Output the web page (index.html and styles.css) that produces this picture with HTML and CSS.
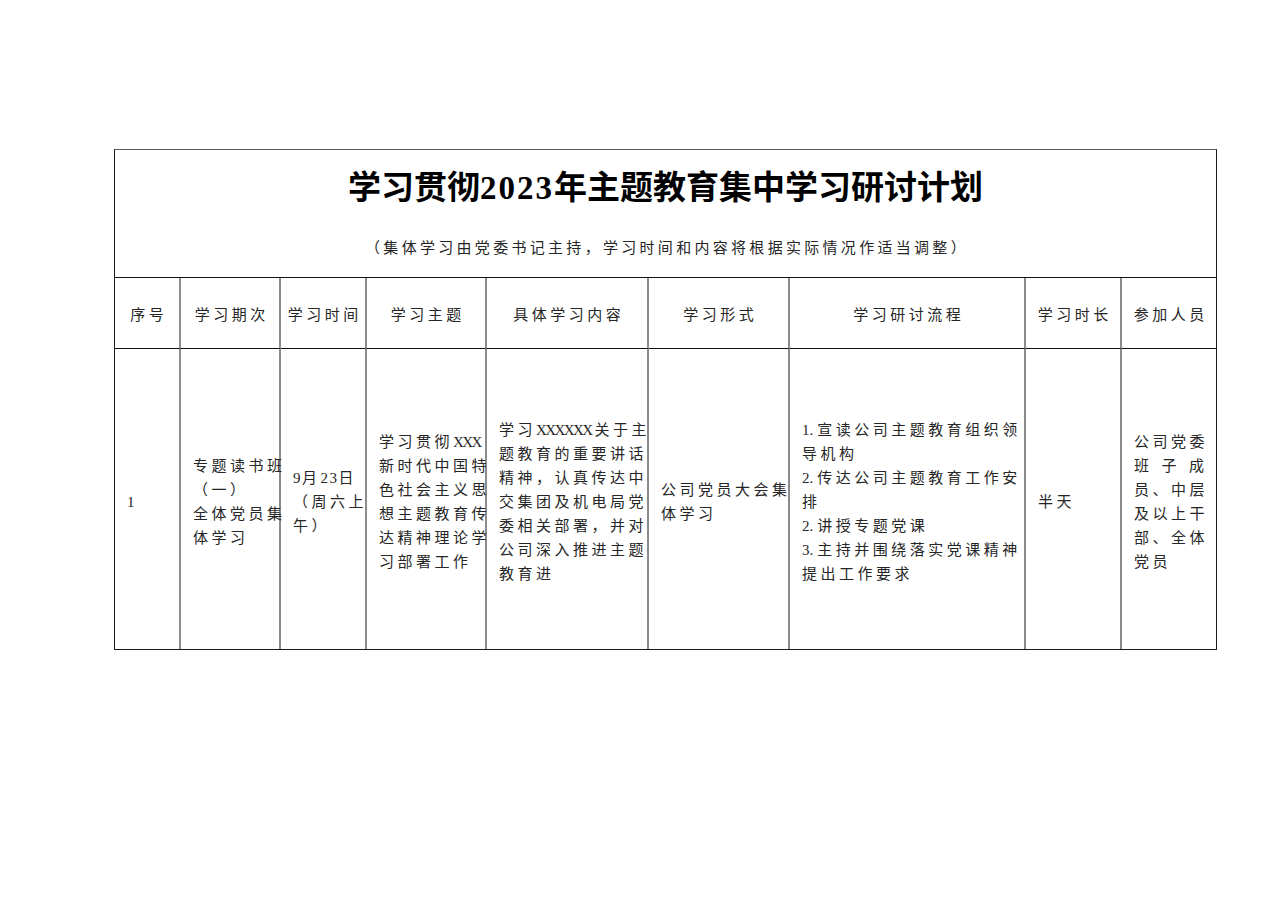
FILE: index.html
```html
<!DOCTYPE html>
<html lang="zh-CN">
<head>
<meta charset="utf-8">
<title>学习贯彻2023年主题教育集中学习研讨计划</title>
<link rel="stylesheet" href="styles.css">
</head>
<body>
<div class="page">
  <div class="sheet">
    <div class="cell title-cell">
      <h1 class="title">学习贯彻<span class="num">2023</span>年主题教育集中学习研讨计划</h1>
      <p class="subtitle">（集体学习由党委书记主持，学习时间和内容将根据实际情况作适当调整）</p>
    </div>

    <div class="cell head">序号</div>
    <div class="cell head">学习期次</div>
    <div class="cell head">学习时间</div>
    <div class="cell head">学习主题</div>
    <div class="cell head">具体学习内容</div>
    <div class="cell head">学习形式</div>
    <div class="cell head">学习研讨流程</div>
    <div class="cell head">学习时长</div>
    <div class="cell head last">参加人员</div>

    <div class="cell body"><span class="ln"><span class="lat">1</span></span></div>
    <div class="cell body">
      <span class="ln">专题读书班</span>
      <span class="ln">（一）</span>
      <span class="ln">全体党员集</span>
      <span class="ln">体学习</span>
    </div>
    <div class="cell body">
      <span class="ln"><span class="lat">9</span>月<span class="lat">23</span>日</span>
      <span class="ln">（周六上</span>
      <span class="ln">午）</span>
    </div>
    <div class="cell body">
      <span class="ln">学习贯彻<span class="lat x">XXX</span></span>
      <span class="ln">新时代中国特</span>
      <span class="ln">色社会主义思</span>
      <span class="ln">想主题教育传</span>
      <span class="ln">达精神理论学</span>
      <span class="ln">习部署工作</span>
    </div>
    <div class="cell body">
      <span class="ln">学习<span class="lat x">XXXXXX</span>关于主</span>
      <span class="ln">题教育的重要讲话</span>
      <span class="ln">精神，认真传达中</span>
      <span class="ln">交集团及机电局党</span>
      <span class="ln">委相关部署，并对</span>
      <span class="ln">公司深入推进主题</span>
      <span class="ln">教育进</span>
    </div>
    <div class="cell body">
      <span class="ln">公司党员大会集</span>
      <span class="ln">体学习</span>
    </div>
    <div class="cell body">
      <span class="ln"><span class="lat num">1.</span>宣读公司主题教育组织领</span>
      <span class="ln">导机构</span>
      <span class="ln"><span class="lat num">2.</span>传达公司主题教育工作安</span>
      <span class="ln">排</span>
      <span class="ln"><span class="lat num">2.</span>讲授专题党课</span>
      <span class="ln"><span class="lat num">3.</span>主持并围绕落实党课精神</span>
      <span class="ln">提出工作要求</span>
    </div>
    <div class="cell body">
      <span class="ln">半天</span>
    </div>
    <div class="cell body last">
      <span class="ln">公司党委</span>
      <span class="ln spread"><span>班</span><span>子</span><span>成</span></span>
      <span class="ln">员、中层</span>
      <span class="ln">及以上干</span>
      <span class="ln">部、全体</span>
      <span class="ln">党员</span>
    </div>
  </div>
</div>
</body>
</html>
```

FILE: styles.css
```css
html, body {
  margin: 0;
  padding: 0;
  background: #ffffff;
}

body {
  font-family: "Liberation Serif", "Noto Sans CJK SC", serif;
  color: #262626;
}

.page {
  padding: 149px 0 0 114px;
}

.sheet {
  display: grid;
  grid-template-columns: 66px 100px 86px 120px 162px 141px 236px 96px 94px;
  grid-template-rows: 128px 71px 300px;
  width: 1101px;
  border: 1px solid #1a1a1a;
  border-top-color: #5a5a5a;
}

.cell {
  box-sizing: border-box;
  border-right: 2px solid #8c8c8c;
  border-bottom: 1px solid #111111;
  min-width: 0;
}

.cell.last {
  border-right: none;
}

.title-cell {
  grid-column: 1 / -1;
  border-right: none;
  display: flex;
  flex-direction: column;
  align-items: center;
  padding-top: 18px;
}

.title {
  margin: 0;
  font-family: "Liberation Serif", "Noto Sans CJK SC", serif;
  font-weight: 700;
  font-size: 33px;
  line-height: 40px;
  color: #000000;
  white-space: nowrap;
}

.title .num {
  letter-spacing: 2px;
}

.subtitle {
  margin: 30px 0 0 0;
  font-size: 15px;
  line-height: 20px;
  letter-spacing: 3.3px;
  padding-left: 3px;
  white-space: nowrap;
}

.head {
  display: flex;
  align-items: center;
  justify-content: center;
  font-size: 15px;
  letter-spacing: 3.5px;
  padding-left: 3.5px;
  white-space: nowrap;
}

.body {
  border-bottom: none;
  display: flex;
  flex-direction: column;
  justify-content: center;
  padding: 5px 0 0 12px;
  font-size: 15px;
  line-height: 24px;
  letter-spacing: 3.5px;
  white-space: nowrap;
}

.ln {
  display: block;
}

.lat {
  font-family: "Liberation Serif", serif;
  font-size: 15px;
  letter-spacing: 1.5px;
}

.lat.num {
  letter-spacing: 0;
  margin-right: 4px;
}

.lat.x {
  font-size: 15px;
  letter-spacing: -1.6px;
  margin-right: 3px;
}

.ln.spread {
  display: flex;
  justify-content: space-between;
  width: 70px;
  letter-spacing: 0;
}
```
